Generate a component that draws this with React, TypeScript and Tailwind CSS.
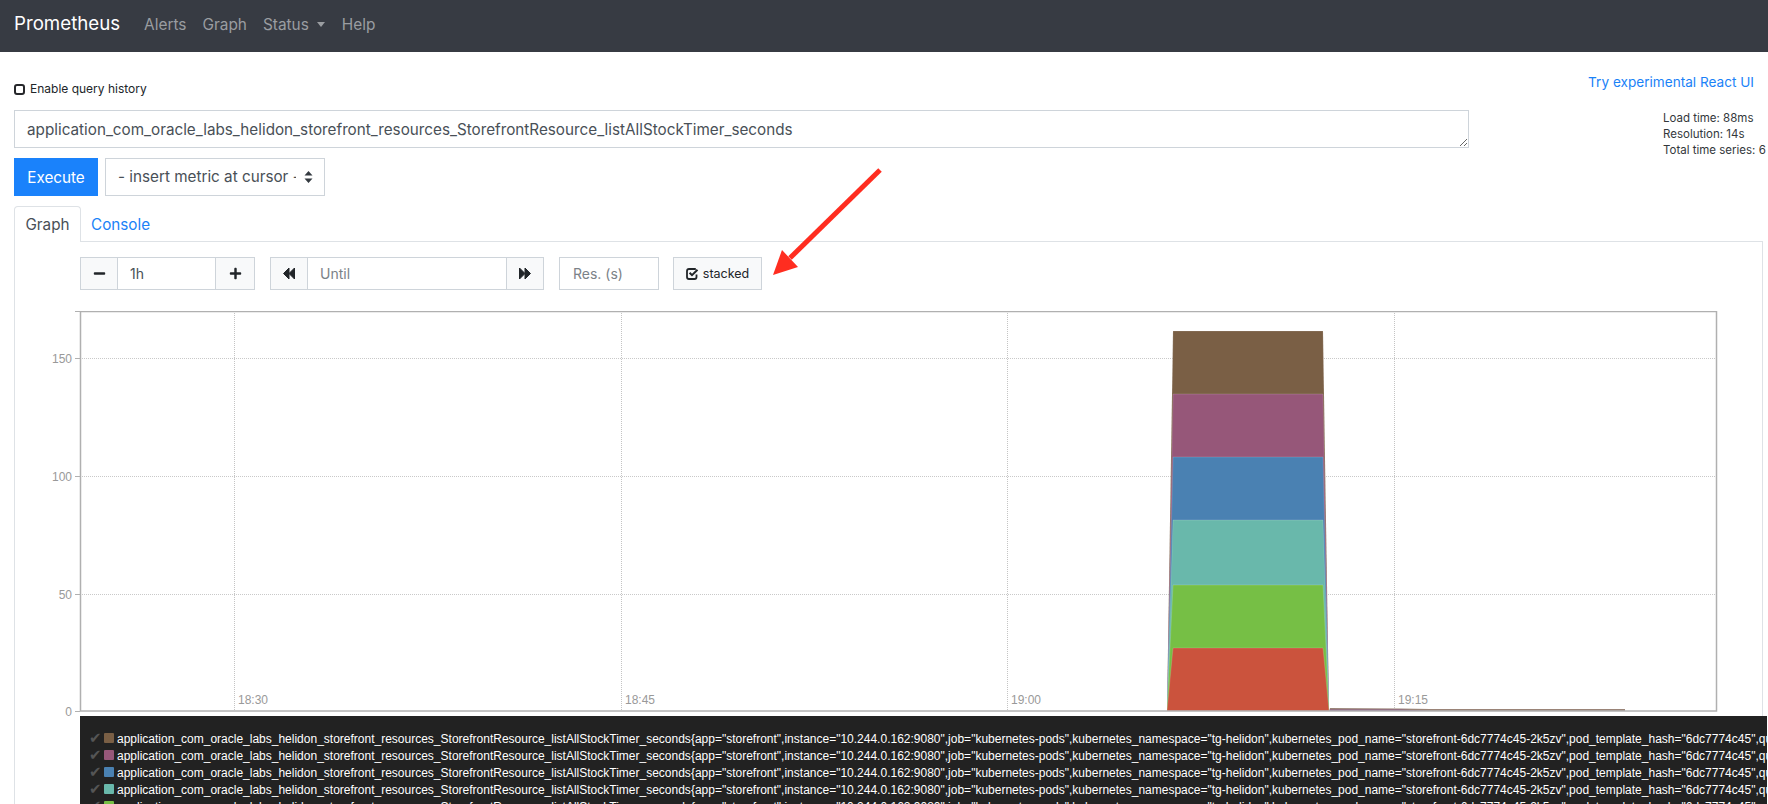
import { FaMinus, FaPlus } from 'react-icons/fa'

const UI = "font-['Inter','Noto_Sans',sans-serif]"

const METRIC = 'application_com_oracle_labs_helidon_storefront_resources_StorefrontResource_listAllStockTimer_seconds'
const LABELS = '{app="storefront",instance="10.244.0.162:9080",job="kubernetes-pods",kubernetes_namespace="tg-helidon",kubernetes_pod_name="storefront-6dc7774c45-2k5zv",pod_template_hash="6dc7774c45",quantile="0.5"}'

// top-most band first, lower bands are painted over it
const BANDS = [
  { color: '#7a5f45', top: 331 },
  { color: '#965779', top: 394 },
  { color: '#4a81b2', top: 457 },
  { color: '#69b8ab', top: 520 },
  { color: '#76bf45', top: 585 },
  { color: '#cb533d', top: 648 },
]

const LEGEND_SWATCHES = ['bg-[#7a5f45]', 'bg-[#965779]', 'bg-[#4a81b2]', 'bg-[#69b8ab]', 'bg-[#76bf45]']

function Navbar() {
  return (
    <nav className="flex items-center h-[52px] bg-[#373b43] pl-[14px] pb-[3px] shrink-0">
      <span className="text-[18.7px] text-white mr-[24px]">Prometheus</span>
      <div className="flex items-center gap-[16px] text-[15.4px] text-[#9a9da1]">
        <span>Alerts</span>
        <span>Graph</span>
        <span className="flex items-center gap-[8px] mr-[1px]">
          Status
          <span className="w-0 h-0 border-x-[4.5px] border-x-transparent border-t-[5px] border-t-[#9a9da1]" />
        </span>
        <span>Help</span>
      </div>
    </nav>
  )
}

function Chart() {
  const xTicks = [{ x: 234, t: '18:30' }, { x: 621, t: '18:45' }, { x: 1007, t: '19:00' }, { x: 1394, t: '19:15' }]
  const yTicks = [{ y: 358, t: '150' }, { y: 476, t: '100' }, { y: 594, t: '50' }, { y: 711, t: '0' }]
  return (
    <svg width="1749" height="405" viewBox="14 311 1749 405" className="block shrink-0 font-['Liberation_Sans',sans-serif]">
      {xTicks.map(k => (
        <g key={k.t}>
          <line x1={k.x + 0.5} x2={k.x + 0.5} y1="311" y2="711" stroke="#c4c4c4" strokeDasharray="1 1" />
          <text x={k.x + 4} y="704" fontSize="12" fill="#999">{k.t}</text>
        </g>
      ))}
      {yTicks.map(k => (
        <g key={k.t}>
          {k.t !== '0' && <line x1="80" x2="1716" y1={k.y + 0.5} y2={k.y + 0.5} stroke="#c9c9c9" strokeDasharray="1 1" />}
          <line x1="75" x2="80" y1={k.y + 0.5} y2={k.y + 0.5} stroke="#b0b0b0" />
          <text x="72" y={k.y + 5} fontSize="12" fill="#999" textAnchor="end">{k.t}</text>
        </g>
      ))}
      {BANDS.map(b => (
        <polygon
          key={b.color}
          points={`1167,711 1173,${b.top} 1323,${b.top} 1329,711`}
          fill={b.color}
          stroke="#ffffff"
          strokeOpacity="0.15"
          strokeWidth="1"
        />
      ))}
      <polygon points="1329,711 1330,708 1400,708.5 1430,709 1625,709 1625,711" fill="#9a8478" />
      <polygon points="1330,709.5 1400,709.5 1430,711 1330,711" fill="#8d5f8a" />
      <rect x="80.5" y="311.5" width="1636" height="399.5" fill="none" stroke="#b0b0b0" strokeWidth="1.5" />
      <line x1="75" x2="80" y1="311.5" y2="311.5" stroke="#b0b0b0" />
    </svg>
  )
}

function Legend() {
  return (
    <div className="ml-[65px] -mr-[5px] pt-[14px] bg-[#222222] overflow-hidden h-[88px] font-['Liberation_Sans',sans-serif]">
      {LEGEND_SWATCHES.map(swatch => (
        <div key={swatch} className="flex items-center h-[17px] whitespace-nowrap pl-[9px]">
          <span className="w-[12px] text-[15px] leading-none text-[#555555] shrink-0 font-['DejaVu_Sans',sans-serif]">✔</span>
          <span className={`w-[10px] h-[10px] ml-[3px] mr-[3px] mb-[2px] rounded-[1px] shrink-0 ${swatch}`} />
          <span className="text-[12px] text-white">{METRIC}{LABELS}</span>
        </div>
      ))}
    </div>
  )
}

const CELL = 'flex items-center justify-center h-full bg-[#f8f9fa] text-[#212529] border-[#ced4da]'

// narrow double triangles, the stock backward icon is too wide for this
function SeekIcon({ flip }: { flip?: boolean }) {
  return (
    <svg width="12" height="13" viewBox="0 0 12 13" fill="#212529" className={flip ? 'rotate-180' : undefined}>
      <path d="M6 1 V12 L0.5 6.5 Z" stroke="#212529" strokeLinejoin="round" />
      <path d="M11.5 1 V12 L6 6.5 Z" stroke="#212529" strokeLinejoin="round" />
    </svg>
  )
}

function Controls() {
  return (
    <div className="flex items-center h-[33px] mt-[15px] ml-[65px] text-[14px] text-[#495057]">
      <div className="flex h-full w-[175px] border border-[#ced4da]">
        <span className={`${CELL} w-[37px] border-r text-[13px]`}><FaMinus /></span>
        <span className="flex-1 flex items-center pl-[12px]">1h</span>
        <span className={`${CELL} w-[39px] border-l text-[13px]`}><FaPlus /></span>
      </div>
      <div className="flex h-full w-[274px] ml-[15px] border border-[#ced4da]">
        <span className={`${CELL} w-[37px] border-r`}><SeekIcon /></span>
        <span className="flex-1 flex items-center pl-[12px] text-[#7b8288]">Until</span>
        <span className={`${CELL} w-[37px] border-l`}><SeekIcon flip /></span>
      </div>
      <div className="flex items-center h-full w-[100px] ml-[15px] pl-[13px] border border-[#ced4da] text-[#7b8288]">Res. (s)</div>
      <div className="flex items-center justify-center gap-[4px] h-full w-[89px] ml-[14px] border border-[#ced4da] bg-[#f8f9fa] text-[12.5px] text-[#212529]">
        <svg width="13" height="12" viewBox="0 0 13 12" fill="none" stroke="#212529" strokeWidth="1.8">
          <path d="M9.8 1 H3 Q1 1 1 3 V9 Q1 11 3 11 H8.5 Q10.5 11 10.5 9 V6.5" />
          <path d="M3.6 4.8 L6 7.2 L11.5 1.8" strokeWidth="2" />
        </svg>
        <span className="pt-[1px]">stacked</span>
      </div>
    </div>
  )
}

export default function App() {
  return (
    <div className={`relative flex flex-col h-[804px] overflow-hidden bg-white ${UI}`}>
      <Navbar />

      <div className="flex items-start justify-between pl-[14px] pr-[14px] pt-[21px] h-[58px]">
        <label className="flex items-center gap-[5px] text-[12px] text-[#212529] mt-[7px]">
          <input type="checkbox" className="appearance-none w-[11px] h-[11px] border-2 border-[#26282b] rounded-[3px]" />
          Enable query history
        </label>
        <span className="text-[13.6px] text-[#1a82f7] mt-[-1px]">Try experimental React UI</span>
      </div>

      <div className="flex pl-[14px] h-[38px]">
        <textarea
          readOnly
          rows={1}
          value={METRIC}
          className="w-[1455px] h-[38px] px-[12px] py-[8px] text-[15.25px] text-[#495057] border border-[#ced4da] outline-none"
        />
        <div className="ml-[194px] text-[11.5px] leading-[16px] text-[#33373b] whitespace-nowrap">
          <div>Load time: 88ms</div>
          <div>Resolution: 14s</div>
          <div>Total time series: 6</div>
        </div>
      </div>

      <div className="flex gap-[7px] pl-[14px] mt-[10px] h-[38px]">
        <div className="flex items-center justify-center w-[84px] pt-[2px] bg-[#1a82fb] text-white text-[15.25px]">Execute</div>
        <div className="flex items-center w-[220px] pl-[12px] border border-[#ced4da] text-[15.25px] text-[#495057]">
          {/* the option text is clipped by the select in the original */}
          <span className="w-[178px] overflow-hidden whitespace-nowrap">- insert metric at cursor -</span>
          <svg width="9" height="14" viewBox="0 0 9 14" className="ml-[8px] shrink-0">
            <path d="M4.5 1 L8.5 5.5 H0.5 Z M4.5 13 L8.5 8.5 H0.5 Z" fill="#343a40" />
          </svg>
        </div>
      </div>

      <div className="flex items-end h-[36px] mt-[10px] ml-[14px] mr-[5px] text-[15.25px] shrink-0">
        <div className="flex items-center justify-center w-[67px] h-full pt-[1px] border border-[#dee2e6] border-b-0 rounded-t-[4px] text-[#495057]">Graph</div>
        <div className="flex-1 flex items-center h-full pl-[10px] pt-[3px] border-b border-[#dee2e6] text-[#1a82f7]">Console</div>
      </div>

      <div className="flex-1 flex flex-col ml-[14px] mr-[5px] border-x border-[#dee2e6]">
        <Controls />
        <div className="-ml-[1px] -mr-[1px] mt-[21px]">
          <Chart />
        </div>
        <Legend />
      </div>

      {/* annotation arrow drawn over the screenshot */}
      <svg width="1768" height="804" className="absolute inset-0 pointer-events-none">
        <line x1="880" y1="170" x2="790" y2="258" stroke="#ff2d20" strokeWidth="5" />
        <polygon points="773,275 782,250 798,267" fill="#ff2d20" />
      </svg>
    </div>
  )
}
